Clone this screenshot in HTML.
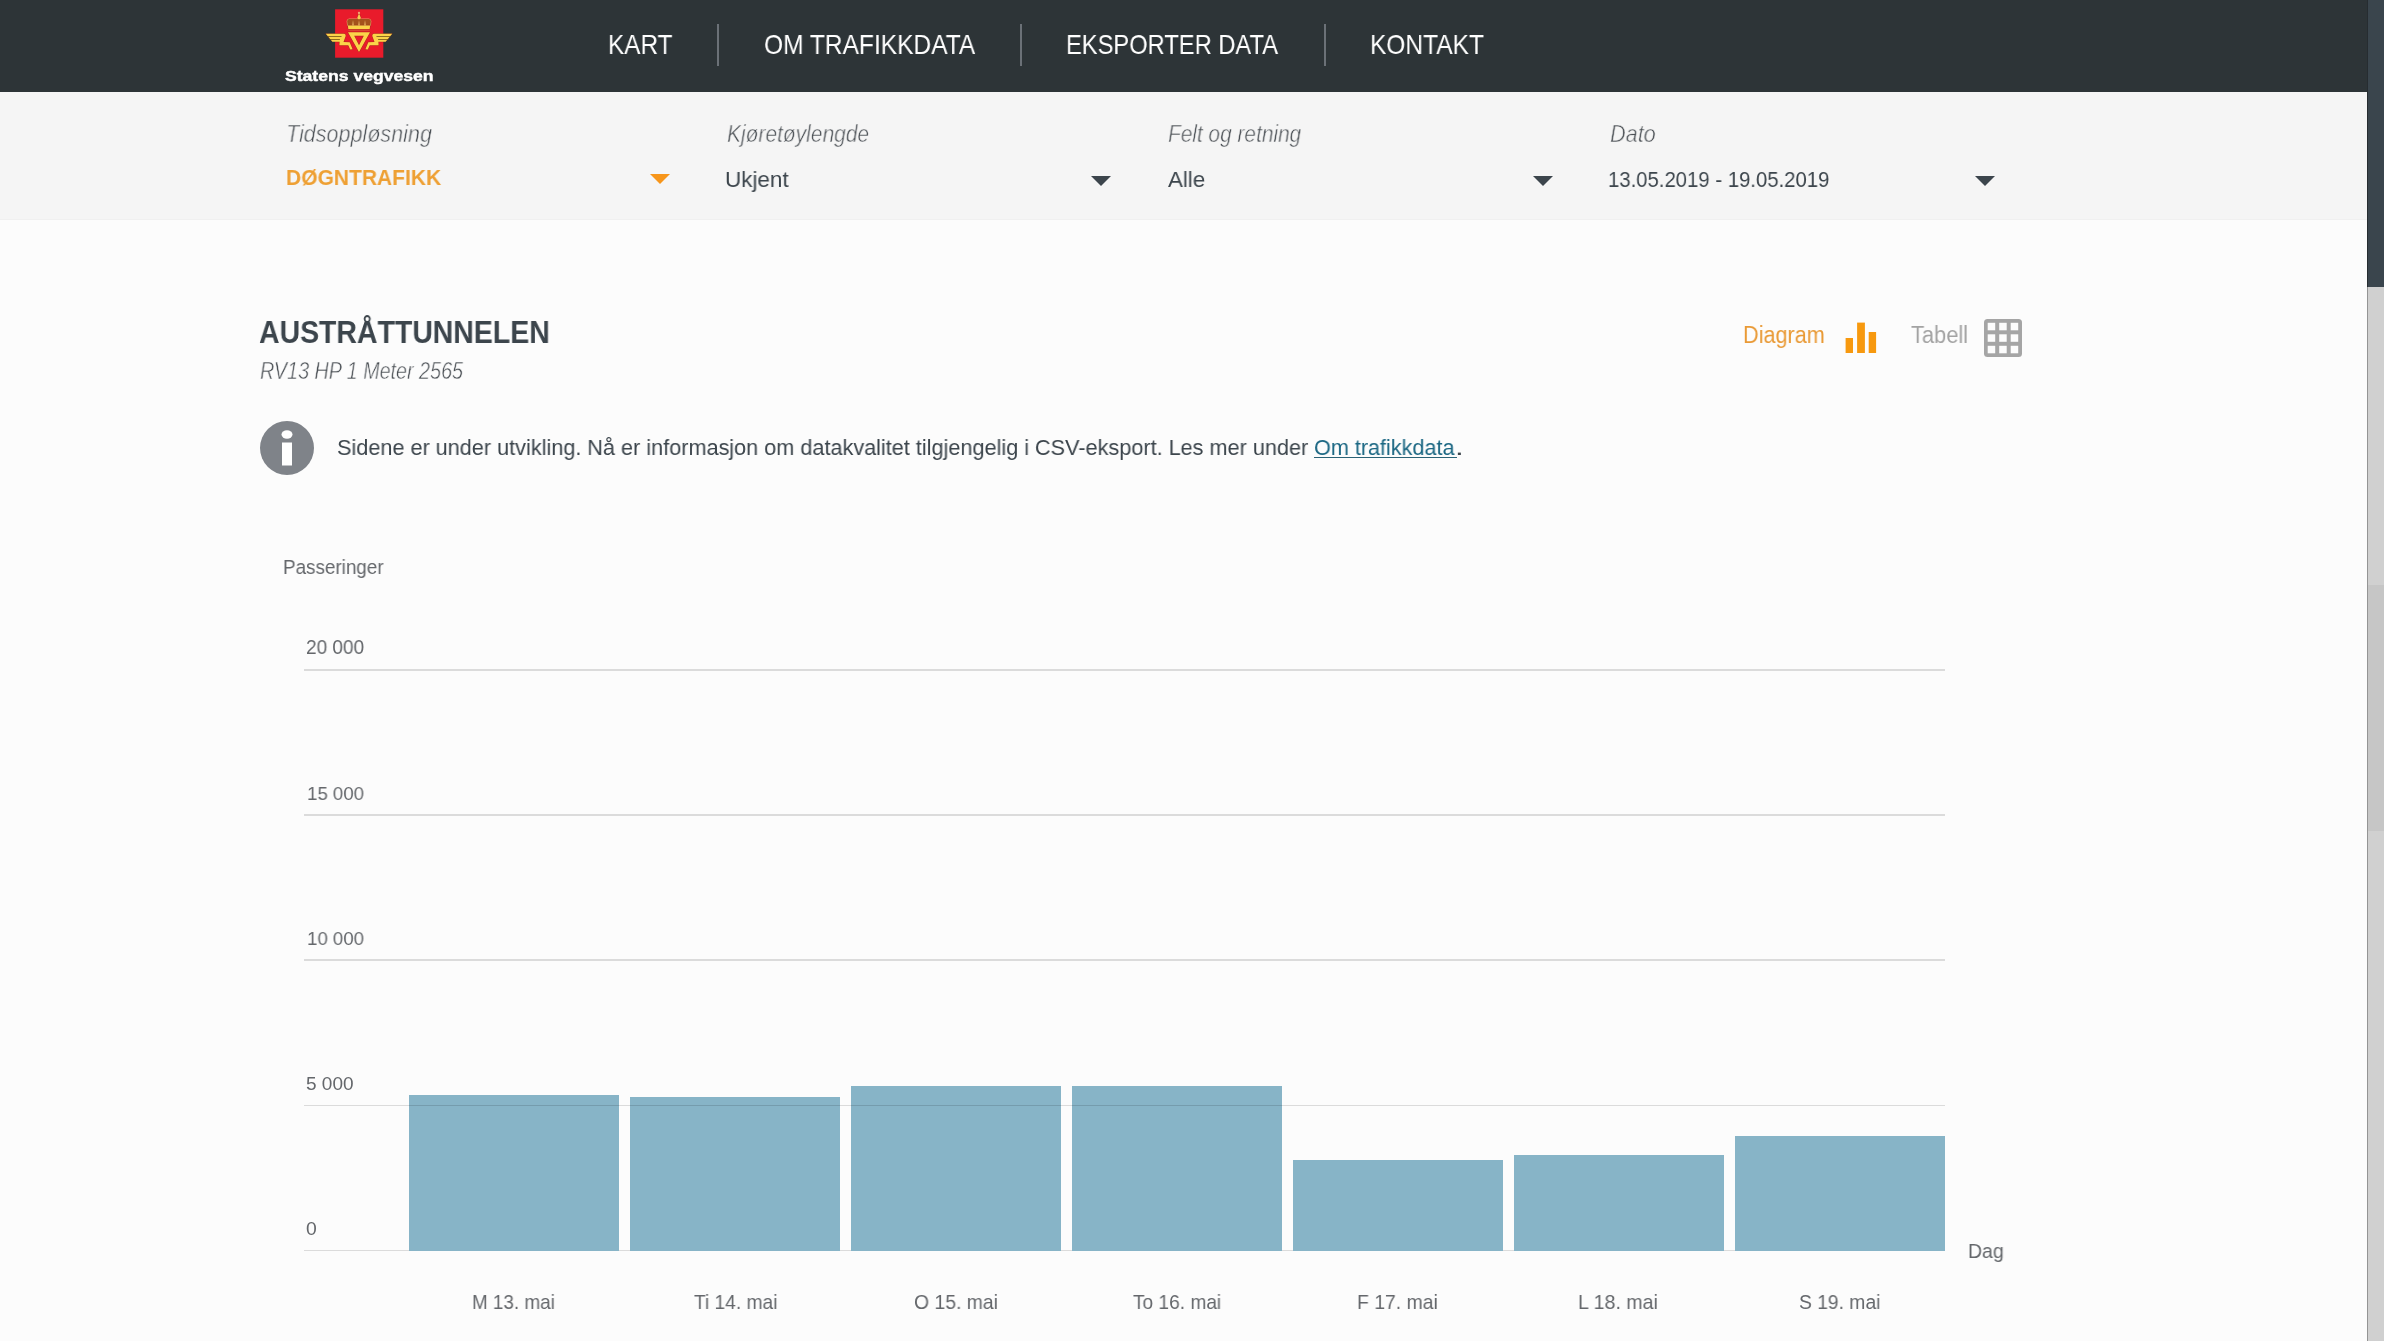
<!DOCTYPE html>
<html lang="no">
<head>
<meta charset="utf-8">
<title>Trafikkdata</title>
<style>
html,body{margin:0;padding:0;}
body{width:2384px;height:1341px;overflow:hidden;position:relative;background:#fcfcfc;font-family:"Liberation Sans",sans-serif;}
.a{position:absolute;white-space:nowrap;line-height:1;transform-origin:0 0;will-change:transform;}
#hdr{position:absolute;left:0;top:0;width:2367px;height:92px;background:#2d3437;}
#flt{position:absolute;left:0;top:92px;width:2367px;height:127px;background:#f5f5f5;border-bottom:1px solid #f0f0f0;}
.sep{position:absolute;top:24px;width:2px;height:42px;background:#6b7177;}
.tri{position:absolute;width:0;height:0;border-left:10px solid transparent;border-right:10px solid transparent;border-top:10.5px solid #3c454c;}
.grid{position:absolute;left:304px;width:1641px;height:2px;background:rgba(0,0,0,0.13);}
.bar{position:absolute;width:210px;background:#87b4c7;}
#sb{position:absolute;left:2367px;top:0;width:16px;height:1341px;background:#d0d0d0;border-left:1px solid #949494;}
#thumb{position:absolute;left:2367px;top:0;width:16px;height:287px;background:#3a454d;border-left:1px solid #262c30;}
#thumb2{position:absolute;left:2368px;top:585px;width:16px;height:246px;background:#c6c6c6;}
</style>
</head>
<body>
<div id="hdr"></div>
<div id="flt"></div>

<svg id="logosvg" class="a" style="left:320px;top:5px;" width="80" height="57" viewBox="0 0 80 57">
  <rect x="15.1" y="4.3" width="48.2" height="48.4" fill="#e91b2b"/>
  <g stroke="#8e2c12" stroke-width="0.7" paint-order="stroke" stroke-linejoin="round">
    <path d="M27.6 20.5 L27.2 16.1 Q27.2 14.1 29.2 14.1 L48.8 14.1 Q50.8 14.1 50.8 16.1 L50.4 20.5 Z" fill="#a4521c" stroke="#f0bf7e" stroke-width="0.9"/>
    <path d="M27.9 20.4 L50.1 20.4 L49.7 24 L28.3 24 Z" fill="#fbd449"/>
    <path d="M28 27.2 L50 27.2 L39 47 Z M34.2 30.8 L43.8 30.8 L39 40.3 Z" fill-rule="evenodd" fill="#fbd449"/>
  </g>
  <rect x="28.3" y="24.7" width="21.4" height="0.8" fill="#c8703a"/>
  <g fill="#eab865">
    <path d="M32.2 20.5 L33 15 L33.8 20.5 Z"/>
    <path d="M38.2 20.5 L39 15 L39.8 20.5 Z"/>
    <path d="M44.2 20.5 L45 15 L45.8 20.5 Z"/>
  </g>
  <path d="M38.2 9.4 L39.9 9.4 L39.9 11 L40.7 12 L40.7 13.4 L39.9 14.2 L38.2 14.2 L37.4 13.4 L37.4 12 L38.2 11 Z" fill="#f6cf52" stroke="#8e2c12" stroke-width="0.5" paint-order="stroke"/>
  <circle cx="39" cy="8" r="1.15" fill="#eba877"/>
  <g id="lw">
    <path d="M5.8 28.7 L24.3 28.7 Q25.9 28.9 25.7 31 L23.5 37 L29.7 37.2 L32.6 44.3 L30.2 44.6 L28.3 40.3 L19.4 40.3 L19.6 36.7 L12.4 36.7 Z" fill="#fbd449" stroke="#8e2c12" stroke-width="0.6" paint-order="stroke" stroke-linejoin="round"/>
    <path d="M7.5 31.2 L21.6 31.2 L21.4 31.9 L8.1 31.9 Z" fill="#6a4a12"/>
    <path d="M9.0 33.9 L20.0 33.9 L19.8 34.8 L9.7 34.8 Z" fill="#6a4a12"/>
  </g>
  <use href="#lw" transform="matrix(-1 0 0 1 78 0)"/>
</svg>

<div class="sep" style="left:717px;"></div>
<div class="sep" style="left:1020px;"></div>
<div class="sep" style="left:1324px;"></div>

<div class="tri" style="left:650px;top:174px;border-top-color:#f7961b;"></div>
<div class="tri" style="left:1091px;top:175.5px;"></div>
<div class="tri" style="left:1533px;top:175.5px;"></div>
<div class="tri" style="left:1975px;top:175.5px;"></div>

<svg class="a" style="left:1845px;top:322px;" width="32" height="32" viewBox="0 0 32 32">
  <rect x="0.6" y="16" width="7.4" height="15" fill="#f7990f"/>
  <rect x="12.1" y="0.6" width="7.8" height="30.4" fill="#f7990f"/>
  <rect x="23.7" y="10" width="7.4" height="21" fill="#f7990f"/>
</svg>
<svg class="a" style="left:1984px;top:319px;" width="38" height="38" viewBox="0 0 38 38">
  <rect x="0" y="0" width="38" height="38" rx="3.5" fill="#a5a5a5"/>
  <g fill="#fcfcfc"><rect x="3.7" y="3.8" width="7.5" height="7.5"/><rect x="15.2" y="3.8" width="7.5" height="7.5"/><rect x="26.7" y="3.8" width="7.5" height="7.5"/><rect x="3.7" y="15.3" width="7.5" height="7.5"/><rect x="15.2" y="15.3" width="7.5" height="7.5"/><rect x="26.7" y="15.3" width="7.5" height="7.5"/><rect x="3.7" y="26.8" width="7.5" height="7.5"/><rect x="15.2" y="26.8" width="7.5" height="7.5"/><rect x="26.7" y="26.8" width="7.5" height="7.5"/></g>
</svg>

<svg class="a" style="left:260px;top:421px;" width="54" height="54" viewBox="0 0 54 54">
  <circle cx="27" cy="27" r="27" fill="#7f8389"/>
  <ellipse cx="27" cy="13.5" rx="5.5" ry="4.2" fill="#fff"/>
  <rect x="22" y="21.5" width="10" height="23" fill="#fff"/>
</svg>

<div class="grid" style="top:1250px;height:1px;"></div>
<div class="bar" style="left:409px;top:1095px;height:156px;"></div>
<div class="bar" style="left:630px;top:1097px;height:154px;"></div>
<div class="bar" style="left:851px;top:1086px;height:165px;"></div>
<div class="bar" style="left:1072px;top:1086px;height:165px;"></div>
<div class="bar" style="left:1293px;top:1160px;height:91px;"></div>
<div class="bar" style="left:1514px;top:1155px;height:96px;"></div>
<div class="bar" style="left:1735px;top:1136px;height:115px;"></div>

<div class="grid" style="top:669px;"></div>
<div class="grid" style="top:814px;"></div>
<div class="grid" style="top:959px;"></div>
<div class="grid" style="top:1105px;height:1px;"></div>

<div style="position:absolute;left:1314px;top:457px;width:142.5px;height:1px;background:#2a6276;"></div>
<div id="nav1" class="a" style="left:607.61px;top:31.39px;font-size:27.54px;transform:scaleX(0.8848);color:#fff;">KART</div>
<div id="nav2" class="a" style="left:763.67px;top:31.39px;font-size:27.54px;transform:scaleX(0.8907);color:#fff;">OM TRAFIKKDATA</div>
<div id="nav3" class="a" style="left:1066.28px;top:31.39px;font-size:27.54px;transform:scaleX(0.8607);color:#fff;">EKSPORTER DATA</div>
<div id="nav4" class="a" style="left:1369.86px;top:31.39px;font-size:27.54px;transform:scaleX(0.8896);color:#fff;">KONTAKT</div>
<div id="logo" class="a" style="left:285.01px;top:68.12px;font-size:15.51px;transform:scaleX(1.1348);color:#fff;font-weight:bold;-webkit-text-stroke:0.45px #fff;">Statens vegvesen</div>
<div id="l1" class="a" style="left:286.14px;top:123.19px;font-size:23.19px;transform:scaleX(0.9291);color:#4b5055;font-style:italic;-webkit-text-stroke:0.5px #f5f5f5;">Tidsoppløsning</div>
<div id="v1" class="a" style="left:285.61px;top:166.36px;font-size:22.75px;transform:scaleX(0.9229);color:#eea034;font-weight:bold;">DØGNTRAFIKK</div>
<div id="l2" class="a" style="left:726.53px;top:123.19px;font-size:23.19px;transform:scaleX(0.9038);color:#4b5055;font-style:italic;-webkit-text-stroke:0.5px #f5f5f5;">Kjøretøylengde</div>
<div id="v2" class="a" style="left:725.35px;top:168.44px;font-size:22.90px;transform:scaleX(0.9811);color:#3c454c;">Ukjent</div>
<div id="l3" class="a" style="left:1167.94px;top:123.19px;font-size:23.19px;transform:scaleX(0.8987);color:#4b5055;font-style:italic;-webkit-text-stroke:0.5px #f5f5f5;">Felt og retning</div>
<div id="v3" class="a" style="left:1167.90px;top:168.44px;font-size:22.90px;transform:scaleX(0.9736);color:#3c454c;">Alle</div>
<div id="l4" class="a" style="left:1610.46px;top:123.19px;font-size:23.19px;transform:scaleX(0.9339);color:#4b5055;font-style:italic;-webkit-text-stroke:0.5px #f5f5f5;">Dato</div>
<div id="v4" class="a" style="left:1608.36px;top:168.44px;font-size:22.90px;transform:scaleX(0.8874);color:#3c454c;">13.05.2019 - 19.05.2019</div>
<div id="title" class="a" style="left:259.48px;top:317.27px;font-size:31.45px;transform:scaleX(0.9046);color:#3c454c;font-weight:bold;">AUSTRÅTTUNNELEN</div>
<div id="sub" class="a" style="left:260.21px;top:360.19px;font-size:23.19px;transform:scaleX(0.8512);color:#4b5055;font-style:italic;-webkit-text-stroke:0.5px #fcfcfc;">RV13 HP 1 Meter 2565</div>
<div id="diag" class="a" style="left:1743.12px;top:324.22px;font-size:23.04px;transform:scaleX(0.9405);color:#e99a36;">Diagram</div>
<div id="tab" class="a" style="left:1911.43px;top:324.42px;font-size:23.04px;transform:scaleX(0.9484);color:#a3a3a3;">Tabell</div>
<div id="info" class="a" style="left:336.73px;top:436.61px;font-size:22.46px;transform:scaleX(0.9643);color:#3c454c;">Sidene er under utvikling. Nå er informasjon om datakvalitet tilgjengelig i CSV-eksport. Les mer under</div>
<div id="link" class="a" style="left:1314.33px;top:436.61px;font-size:22.46px;transform:scaleX(0.9627);color:#1b6783;">Om trafikkdata</div>
<div id="dot" class="a" style="left:1455.20px;top:436.61px;font-size:22.46px;transform:scaleX(1.4017);color:#3c454c;">.</div>
<div id="pass" class="a" style="left:283.26px;top:558.05px;font-size:19.71px;transform:scaleX(0.9574);color:#64676b;">Passeringer</div>
<div id="y20" class="a" style="left:306.43px;top:637.55px;font-size:19.71px;transform:scaleX(0.9661);color:#64676b;">20 000</div>
<div id="y15" class="a" style="left:307.23px;top:783.84px;font-size:19.13px;transform:scaleX(0.9756);color:#64676b;">15 000</div>
<div id="y10" class="a" style="left:307.23px;top:928.84px;font-size:19.13px;transform:scaleX(0.9756);color:#64676b;">10 000</div>
<div id="y5" class="a" style="left:306.37px;top:1074.68px;font-size:18.26px;transform:scaleX(1.0412);color:#64676b;">5 000</div>
<div id="y0" class="a" style="left:306.10px;top:1220.35px;font-size:18.41px;transform:scaleX(1.0515);color:#64676b;">0</div>
<div id="dag" class="a" style="left:1968.06px;top:1242.44px;font-size:19.86px;transform:scaleX(0.9796);color:#64676b;">Dag</div>
<div id="x1" class="a" style="left:472.11px;top:1292.08px;font-size:20.14px;transform:scaleX(0.9368);color:#64676b;">M 13. mai</div>
<div id="x2" class="a" style="left:693.52px;top:1292.08px;font-size:20.14px;transform:scaleX(0.9513);color:#64676b;">Ti 14. mai</div>
<div id="x3" class="a" style="left:913.94px;top:1292.08px;font-size:20.14px;transform:scaleX(0.9625);color:#64676b;">O 15. mai</div>
<div id="x4" class="a" style="left:1132.83px;top:1292.08px;font-size:20.14px;transform:scaleX(0.9496);color:#64676b;">To 16. mai</div>
<div id="x5" class="a" style="left:1356.56px;top:1292.08px;font-size:20.14px;transform:scaleX(0.9630);color:#64676b;">F 17. mai</div>
<div id="x6" class="a" style="left:1578.05px;top:1292.08px;font-size:20.14px;transform:scaleX(0.9750);color:#64676b;">L 18. mai</div>
<div id="x7" class="a" style="left:1799.03px;top:1293.37px;font-size:19.57px;transform:scaleX(0.9851);color:#64676b;">S 19. mai</div>

<div id="sb"></div>
<div id="thumb2"></div>
<div id="thumb"></div>
</body>
</html>
